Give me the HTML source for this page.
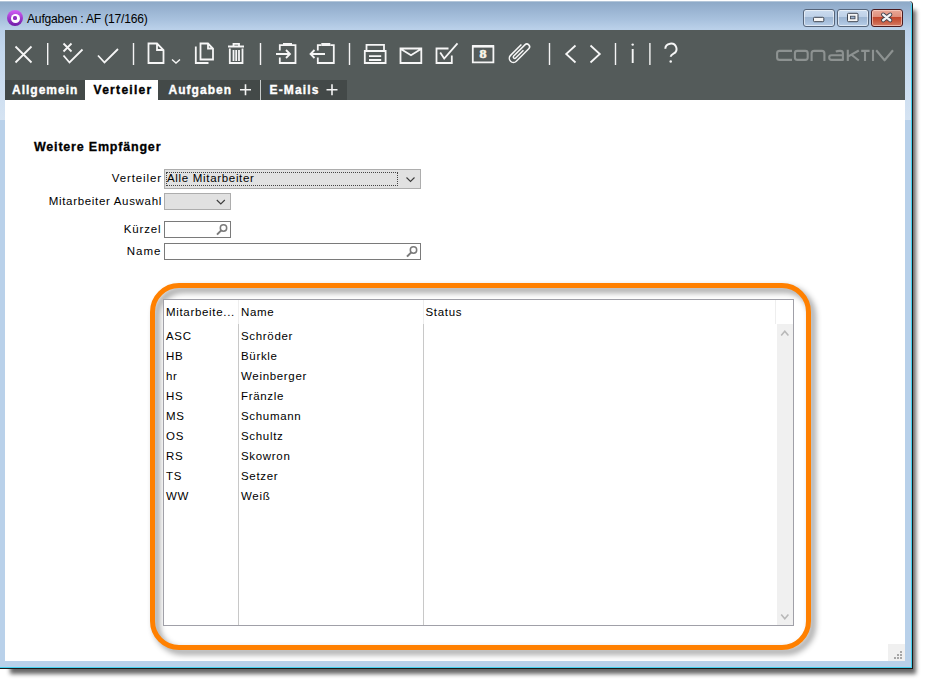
<!DOCTYPE html>
<html><head><meta charset="utf-8">
<style>
*{margin:0;padding:0;box-sizing:border-box}
html,body{width:928px;height:684px;overflow:hidden;background:#fff;font-family:"Liberation Sans",sans-serif}
.a{position:absolute}
#win{left:-8px;top:1px;width:921px;height:668px;background:#b9d1ea;border:1px solid #1a1a1a;border-top:0;border-radius:0 4px 0 0}
#wsh{left:10px;top:10px;width:906px;height:664px;background:rgba(0,0,0,.6);filter:blur(2.2px)}
#wininner{left:-7px;top:1px;width:919px;height:667px;border:1px solid #45d2f0;border-top-color:transparent;border-left-color:transparent;border-radius:5px 5px 0 0}
#title{left:0;top:1px;width:911px;height:119px;border-radius:0 4px 0 0;background:linear-gradient(#c6d4e2 0,#8eaac8 1.5px,#9ab4d2 9px,#a9c2de 19px,#bad0e9 28px,#c4d8ee 50px,#d5e3f2 119px)}
#ttext{left:27px;top:12px;font-size:12.1px;letter-spacing:-.2px;color:#000;white-space:nowrap}
.wb{top:9px;height:18px;width:32px;border:1px solid #56657a;border-radius:3px;box-shadow:inset 0 0 0 1px rgba(255,255,255,.55);background:linear-gradient(#cbdcef 0%,#bed1e8 42%,#9db6d2 44%,#a6bedb 70%,#b8cee7 100%)}
.cl{width:32px;border-color:#4a1a1e!important;box-shadow:inset 0 0 0 1px rgba(255,220,210,.6)!important;background:linear-gradient(#eaa897 0%,#df8f7c 42%,#c2452b 44%,#c85a40 70%,#d47c66 100%)!important}
#toolbar{left:5px;top:30px;width:900px;height:70px;background:#545b5a}
#content{left:5px;top:100px;width:900px;height:561px;background:#fff}
.tab{top:80px;height:20px;background:#434948;color:#fff;font-weight:bold;font-size:12px;letter-spacing:.75px;white-space:nowrap;-webkit-text-stroke:.35px currentColor}
.sep{width:1.4px;background:#e8e8e8;top:43px;height:22px}
svg{position:absolute;overflow:visible}
.lbl{font-size:11.5px;letter-spacing:.68px;color:#000;white-space:nowrap;text-align:right}
.cell{font-size:11.5px;letter-spacing:.68px;color:#000;white-space:nowrap}
</style></head><body>
<div id="wsh" class="a"></div>
<div id="win" class="a"></div>
<div id="wininner" class="a"></div>
<div id="title" class="a"></div>
<!-- app icon -->
<div class="a" style="left:7px;top:10px;width:16px;height:16px;border-radius:50%;background:linear-gradient(#d35ff6,#6e1aa6)"></div>
<div class="a" style="left:10.5px;top:13.5px;width:9px;height:9px;border-radius:50%;background:#fff"></div>
<div class="a" style="left:13.4px;top:16.4px;width:3.2px;height:3.2px;border-radius:50%;background:#9030c0"></div>
<div id="ttext" class="a">Aufgaben : AF (17/166)</div>
<div class="a wb" style="left:803px"></div>
<div class="a wb" style="left:837px"></div>
<div class="a wb cl" style="left:871px"></div>
<svg style="left:0;top:0" width="928" height="30" viewBox="0 0 928 30">
 <rect x="813.5" y="17.3" width="10.3" height="4.4" rx="1" fill="#f6f6f6" stroke="#3d4450" stroke-width="1"/>
 <rect x="847.5" y="13.3" width="10.5" height="8.4" rx="1" fill="#f6f6f6" stroke="#3d4450" stroke-width="1"/>
 <rect x="850.5" y="16.2" width="4.5" height="2.6" fill="#9cb4d0" stroke="#3d4450" stroke-width="0.8"/>
 <path d="M883.2 14.6 L890.2 20.2 M890.2 14.6 L883.2 20.2" stroke="#3a3f4c" stroke-width="4.2" stroke-linecap="round"/>
 <path d="M883.2 14.6 L890.2 20.2 M890.2 14.6 L883.2 20.2" stroke="#f4f4f4" stroke-width="2.4" stroke-linecap="round"/>
</svg>

<div id="toolbar" class="a"></div>
<div id="content" class="a"></div>

<svg style="left:0;top:0" width="928" height="100" viewBox="0 0 928 100">
<g fill="none" stroke="#f6f6f6" stroke-width="1.8" stroke-linecap="butt" stroke-linejoin="miter">
 <path d="M15.5 46.5 L31.5 62.5 M31.5 46.5 L15.5 62.5"/>
 <path d="M63.5 43.5 L71.5 51.5 M71.5 43.5 L63.5 51.5"/>
 <path d="M63.5 55.5 L69.5 62.5 L82.5 49.5"/>
 <path d="M98 55.5 L104.5 62.5 L118 49"/>
 <path d="M148.5 43.5 H157 L163.5 50 V63 H148.5 Z M157 43.5 V50 H163.5"/>
 <path d="M172 59.5 L176 63 L180 59.5" stroke-width="1.4"/>
 <path d="M195.8 46.5 V63 H208.5 M200.5 43.5 H208 L213 48.5 V59.5 H200.5 Z M208 43.5 V48.5 H213"/>
 <path d="M228 46.5 H244 M233.5 46.5 V43.8 H239 V46.5 M229.8 48.5 V63 H242.5 V48.5 M233.5 50 V61 M236.2 50 V61 M239 50 V61"/>
 <path d="M279.8 50.5 V45.2 H283 M292 45.2 H295.5 V63 H279.8 V57.5 M276 54 H290 M286 50 L290 54 L286 58"/>
 <path d="M317.8 50.5 V45.2 H321.3 M330.3 45.2 H333.8 V63 H317.8 V57.5 M325 54 H310.5 M314.5 50 L310.5 54 L314.5 58"/>
 <path d="M366.5 51 V44.8 H384 V51 M364.8 51 H385.6 V63 H364.8 Z M369 56.2 H381.2 M369 60 H381.2"/>
 <path d="M400.5 48.5 H421.3 V63 H400.5 Z M400.8 49 L411 55.3 L421 49"/>
 <path d="M448.5 48.5 H436.5 V63 H451.8 V55.5 M440.2 52.5 L444.2 58.5 L457.5 43.3"/>
 <path d="M472.8 46.2 H493.4 V62.3 H472.8 Z" />
 <path d="M472.2 46.3 H494" stroke-width="2.6"/>
 <path transform="translate(519.5,52.2) rotate(45)" stroke-width="1.5" d="M-4.1 -6.8 V8.6 A4.1 4.1 0 0 0 4.1 8.6 V-9 A2.75 2.75 0 0 0 -1.4 -9 V6.8 A1.4 1.4 0 0 0 1.4 6.8 V-4.2"/>
 <path d="M575.5 45.5 L566.2 54 L575.5 62.5 M590.5 45.5 L599.8 54 L590.5 62.5"/>
 <path d="M632.7 49 V63" stroke-width="1.9"/>
 <path d="M665.3 48.8 a5.6 5.3 0 1 1 8.2 4.8 c-1.7 0.9 -2.8 1.5 -2.8 3.1 V56.8" stroke-width="2"/>
</g>
<g fill="#f4f4f4">
 <rect x="47" y="43" width="1.4" height="22"/>
 <rect x="132.8" y="43" width="1.4" height="22"/>
 <rect x="259.8" y="43" width="1.4" height="22"/>
 <rect x="348.8" y="43" width="1.4" height="22"/>
 <rect x="548.8" y="43" width="1.4" height="22"/>
 <rect x="614.8" y="43" width="1.4" height="22"/>
 <rect x="649.2" y="43" width="1.4" height="22"/>
 <rect x="283" y="43" width="9" height="3"/>
 <rect x="321.3" y="43" width="9" height="3"/>
 <circle cx="632.7" cy="44.6" r="1.2"/>
 <circle cx="670.7" cy="61.5" r="1.25"/>
 <text x="0" y="0" transform="translate(482.9,58.3) scale(1.22,1)" font-family="Liberation Serif" font-weight="bold" font-size="11.5" text-anchor="middle" fill="#f6f2e6" stroke="#f6f2e6" stroke-width="0.55">8</text>
</g>
<g fill="none" stroke="#8d9291" stroke-width="2.1" stroke-linejoin="round">
 <path d="M792 50.9 H779.6 Q777.1 50.9 777.1 53.4 V57.4 Q777.1 59.9 779.6 59.9 H792"/>
 <rect x="794.9" y="50.9" width="12.8" height="9" rx="2.3"/>
 <path d="M811.6 61 V53.4 Q811.6 50.9 814.1 50.9 H821.9 Q824.4 50.9 824.4 53.4 V61"/>
 <path d="M835.8 51.6 Q837 50.9 839.5 50.9 H840.5 Q842.9 50.9 842.9 53.3 V59.9 H831.5 Q829.2 59.9 829.2 57.6 V57.4 Q829.2 55.2 831.5 55.2 H842.9"/>
 <path d="M847.8 49.8 V61 M848.3 56.3 L858.8 50.5 M851.8 55 L858.8 60.5"/>
 <path d="M861.2 50.9 H869.6 M865 50.9 V61"/>
 <path d="M873 49.8 V61"/>
 <path d="M876.2 50.3 L884.6 60.3 L893 50.3"/>
</g>
</svg>


<div class="a tab" style="left:5px;width:80px"><span class="a" style="left:7px;top:3px;letter-spacing:1px">Allgemein</span></div>
<div class="a tab" style="left:85px;width:73px;background:#fff;color:#000"><span class="a" style="left:8.5px;top:3px;letter-spacing:1.3px">Verteiler</span></div>
<div class="a tab" style="left:158px;width:102px"><span class="a" style="left:10.5px;top:3px;letter-spacing:1.03px">Aufgaben</span></div>
<div class="a" style="left:260px;top:80px;width:1px;height:20px;background:#c8cccb"></div>
<div class="a tab" style="left:261px;width:86px"><span class="a" style="left:8.5px;top:3px;letter-spacing:1.17px">E-Mails</span></div>

<div class="a" style="left:34px;top:140px;font-size:12.5px;font-weight:bold;letter-spacing:.8px;white-space:nowrap;-webkit-text-stroke:.3px #000">Weitere Empfänger</div>

<div class="a" style="left:150px;top:283px;width:661px;height:367px;border:5.7px solid #ff8000;border-radius:29px;filter:drop-shadow(4px 4px 3px rgba(0,0,0,.45))"></div>
<div class="a" style="left:163px;top:299px;width:631px;height:327px;border:1px solid #a0a0a8;background:#fff"></div>

<!-- plus signs on tabs -->
<svg style="left:0;top:0" width="928" height="100">
 <path d="M240 89.8 H251 M245.5 84.3 V95.3 M326.5 89.8 H337.5 M332 84.3 V95.3" stroke="#f4f4f4" stroke-width="1.6" fill="none"/>
</svg>

<div class="a lbl" style="left:62px;width:100px;top:172px;letter-spacing:.9px">Verteiler</div>
<div class="a lbl" style="left:22px;width:140px;top:195px">Mitarbeiter Auswahl</div>
<div class="a lbl" style="left:61.5px;width:100px;top:223px;letter-spacing:.85px">Kürzel</div>
<div class="a lbl" style="left:61.5px;width:100px;top:245px;letter-spacing:1px">Name</div>

<div class="a" style="left:164px;top:169px;width:257px;height:20px;background:#e1e1e1;border:1px solid #adadad"></div>
<div class="a" style="left:166px;top:172px;width:232px;height:14px;border:1px dotted #444"></div>
<div class="a cell" style="left:167px;top:172px">Alle Mitarbeiter</div>
<div class="a" style="left:164px;top:193px;width:67px;height:17px;background:#e1e1e1;border:1px solid #adadad"></div>
<div class="a" style="left:164px;top:221px;width:67px;height:17px;background:#fff;border:1px solid #7a7a7a"></div>
<div class="a" style="left:164px;top:243px;width:257px;height:17px;background:#fff;border:1px solid #7a7a7a"></div>
<svg style="left:0;top:160px" width="928" height="110" viewBox="0 160 928 110">
 <g fill="none" stroke="#3c3c3c" stroke-width="1.1">
  <path d="M406.5 177.5 L410.5 181.5 L414.5 177.5"/>
  <path d="M216.8 200 L220.8 204 L224.8 200"/>
 </g>
 <g fill="none" stroke="#7a7a7a" stroke-width="1.5">
  <circle cx="223.5" cy="228" r="3.2"/><path d="M221.2 230.4 L217 234.6" stroke-width="2"/>
  <circle cx="413.5" cy="250" r="3.2"/><path d="M411.2 252.4 L407 256.6" stroke-width="2"/>
 </g>
</svg>

<!-- grid -->
<div class="a" style="left:238px;top:300px;width:1px;height:24px;background:#eeeeee"></div>
<div class="a" style="left:238px;top:324px;width:1px;height:301px;background:#c8c8c8"></div>
<div class="a" style="left:423px;top:300px;width:1px;height:24px;background:#eeeeee"></div>
<div class="a" style="left:423px;top:324px;width:1px;height:301px;background:#c8c8c8"></div>
<div class="a" style="left:775px;top:300px;width:1px;height:24px;background:#eeeeee"></div>
<div class="a" style="left:777px;top:324px;width:16px;height:301px;background:#f0f0f0"></div>
<svg style="left:0;top:320px" width="928" height="310" viewBox="0 320 928 310">
 <g fill="none" stroke="#b8b8b8" stroke-width="1.6">
  <path d="M781.2 335.5 L784.8 331.2 L788.4 335.5"/>
  <path d="M781.2 614.5 L784.8 618.8 L788.4 614.5"/>
 </g>
</svg>
<div class="a cell" style="left:166px;top:306px">Mitarbeite...</div>
<div class="a cell" style="left:241px;top:306px">Name</div>
<div class="a cell" style="left:425.5px;top:306px">Status</div>
<div class="a cell" style="left:166px;top:326px;line-height:20px">ASC<br>HB<br>hr<br>HS<br>MS<br>OS<br>RS<br>TS<br>WW</div>
<div class="a cell" style="left:241px;top:326px;line-height:20px">Schröder<br>Bürkle<br>Weinberger<br>Fränzle<br>Schumann<br>Schultz<br>Skowron<br>Setzer<br>Weiß</div>

<!-- resize grip -->
<div class="a" style="left:888px;top:644px;width:17px;height:17px;background:#f0f0f0"></div>
<svg style="left:0;top:640px" width="928" height="30" viewBox="0 640 928 30">
 <g fill="#a6a6a6">
  <rect x="900" y="651" width="2" height="2"/>
  <rect x="897" y="654" width="2" height="2"/><rect x="900" y="654" width="2" height="2"/>
  <rect x="894" y="657" width="2" height="2"/><rect x="897" y="657" width="2" height="2"/><rect x="900" y="657" width="2" height="2"/>
 </g>
</svg>
</body></html>
